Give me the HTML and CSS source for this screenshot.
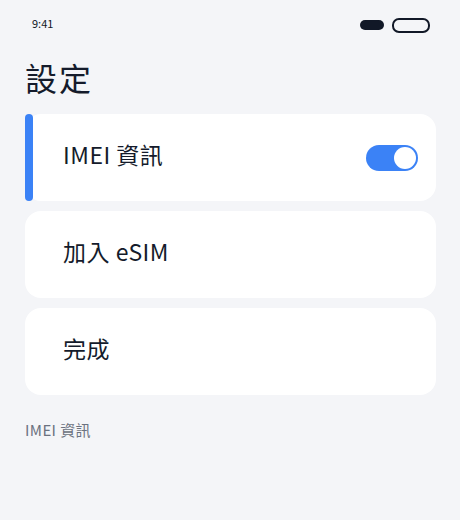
FILE: index.html
```html
<!DOCTYPE html>
<html lang="zh-Hant">
<head>
<meta charset="utf-8">
<title>設定</title>
<link rel="stylesheet" href="styles.css">
</head>
<body>
<div class="screen">
  <div class="status">
    <span class="time">9:41</span>
    <div class="status-icons">
      <span class="pill-filled"></span>
      <span class="pill-outline"></span>
    </div>
  </div>
  <h1 class="title">設定</h1>
  <div class="list">
    <div class="card card--active">
      <span class="bar"></span>
      <span class="label">IMEI 資訊</span>
      <span class="toggle"><span class="knob"></span></span>
    </div>
    <div class="card">
      <span class="label">加入 eSIM</span>
    </div>
    <div class="card">
      <span class="label">完成</span>
    </div>
  </div>
  <p class="footer">IMEI 資訊</p>
</div>
</body>
</html>
```

FILE: styles.css
```css
* { box-sizing: border-box; }
html, body {
  margin: 0;
  padding: 0;
  background: #f4f5f8;
}
body {
  font-family: "Noto Sans CJK TC", "Noto Sans", sans-serif;
  color: #111827;
}
.screen {
  width: 460px;
  height: 520px;
  padding: 0 24px 0 25px;
}
.status {
  display: flex;
  justify-content: space-between;
  align-items: center;
  height: 22px;
  margin-top: 14px;
  padding: 0 6px 0 7px;
}
.time {
  font-size: 11px;
  line-height: 12px;
  margin-top: -4px;
  color: #111827;
}
.status-icons {
  display: flex;
  align-items: center;
  gap: 8px;
}
.pill-filled {
  width: 24px;
  height: 10px;
  border-radius: 5px;
  background: #111827;
}
.pill-outline {
  width: 38px;
  height: 15px;
  border-radius: 7px;
  border: 2px solid #111827;
}
.title {
  margin: 21px 0 17px 0;
  font-size: 32px;
  line-height: 40px;
  font-weight: 400;
  letter-spacing: 2px;
  color: #141b2b;
}
.list {
  display: flex;
  flex-direction: column;
  gap: 10px;
}
.card {
  display: flex;
  align-items: center;
  height: 87px;
  padding: 0 18px 0 38px;
  background: #ffffff;
  border-radius: 16px;
}
.card--active {
  padding-left: 0;
}
.bar {
  align-self: stretch;
  width: 8px;
  border-radius: 4px;
  background: #3b82f6;
  margin-right: 30px;
}
.label {
  flex: 1;
  font-size: 23px;
  line-height: 30px;
  margin-bottom: 7px;
  letter-spacing: 0.5px;
  color: #141b2b;
}
.toggle {
  display: flex;
  justify-content: flex-end;
  align-items: center;
  width: 52px;
  height: 26px;
  padding: 2px;
  border-radius: 13px;
  background: #3b82f6;
}
.knob {
  width: 22px;
  height: 22px;
  border-radius: 50%;
  background: #ffffff;
}
.footer {
  margin: 25px 0 0 0;
  font-size: 15px;
  line-height: 20px;
  letter-spacing: 0.4px;
  color: #6b7280;
}
```
